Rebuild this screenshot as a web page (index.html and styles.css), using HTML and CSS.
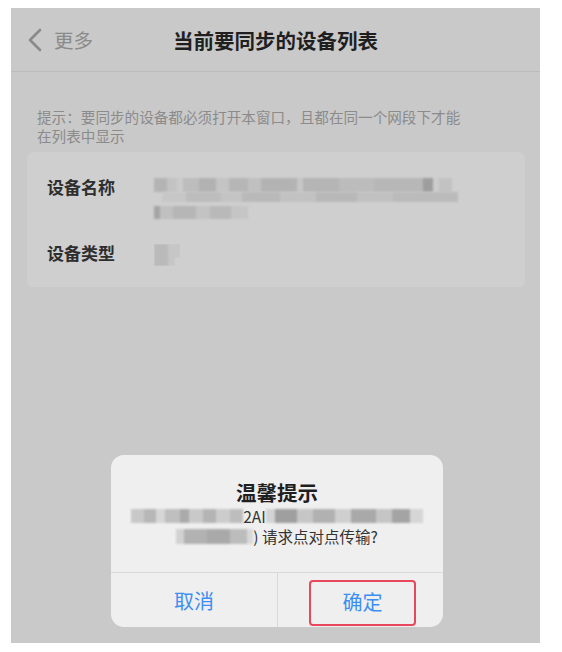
FILE: index.html
```html
<!DOCTYPE html>
<html lang="zh-CN">
<head>
<meta charset="utf-8">
<title>当前要同步的设备列表</title>
<link rel="stylesheet" href="styles.css">
</head>
<body>
<div class="screen">
  <header class="navbar">
    <div class="back">
      <svg class="chevron" width="16" height="24" viewBox="0 0 16 24"><path d="M13 2 L3 12 L13 22" fill="none" stroke="#8a8a8a" stroke-width="2.6" stroke-linecap="round" stroke-linejoin="round"/></svg>
      <span class="back-text">更多</span>
    </div>
    <h1 class="title">当前要同步的设备列表</h1>
    <div></div>
  </header>

  <p class="hint">提示：要同步的设备都必须打开本窗口，且都在同一个网段下才能<br>在列表中显示</p>

  <section class="card">
    <div class="row">
      <div class="label">设备名称</div>
      <div class="value">
        <div class="mos mos-a m1"></div>
        <div class="mos mos-b m2"></div>
        <div class="mos mos-c m3"></div>
      </div>
    </div>
    <div class="row row-type">
      <div class="label">设备类型</div>
      <div class="value">
        <div class="mos mos-t"></div>
      </div>
    </div>
  </section>

  <div class="dialog">
    <div class="dialog-body">
      <div class="dialog-title">温馨提示</div>
      <div class="msg-line">
        <span class="dmos d1"></span><span class="msg-text">2AI</span><span class="dmos d2"></span>
      </div>
      <div class="msg-line">
        <span class="dmos d3"></span><span class="msg-text">) 请求点对点传输?</span>
      </div>
    </div>
    <div class="dialog-actions">
      <div class="btn">取消</div>
      <div class="btn btn-ok"><span class="ok-box">确定</span></div>
    </div>
  </div>
</div>
</body>
</html>
```

FILE: styles.css
```css
* { box-sizing: border-box; }
html, body { margin: 0; padding: 0; background: #ffffff; }
body { font-family: "Noto Sans CJK SC", "Noto Sans", sans-serif; }

.screen {
  position: relative;
  margin: 8px 0 0 11px;
  width: 529px;
  height: 635px;
  background: #c9c9c9;
  overflow: hidden;
}

.navbar {
  height: 64px;
  border-bottom: 1px solid #bcbcbc;
  display: grid;
  grid-template-columns: 1fr auto 1fr;
  align-items: center;
}
.back {
  display: flex;
  align-items: center;
  padding-left: 16px;
  gap: 11px;
}
.chevron { display: block; }
.back-text {
  font-size: 19.5px;
  color: #8a8a8a;
  line-height: 24px;
}
.title {
  margin: 0;
  font-size: 20.5px;
  font-weight: 700;
  color: #1f1f1f;
  line-height: 26px;
  letter-spacing: 0;
}

.hint {
  margin: 35px 0 0 26px;
  font-size: 14.6px;
  line-height: 19px;
  color: #8b8b8b;
}

.card {
  margin: 7px 15px 0 16px;
  background: #cfcfcf;
  border-radius: 6px;
  padding: 24px 20px 21px 20px;
}
.row { display: flex; align-items: flex-start; }
.row-type { margin-top: 23px; }
.label {
  width: 107px;
  flex: none;
  font-size: 17px;
  font-weight: 700;
  line-height: 22px;
  color: #2e2e2e;
}
.value { padding-top: 2px; }

.mos {
  filter: blur(0.9px);
}
.mos-a {
  width: 324px; height: 14px;
  background-image: linear-gradient(90deg,
    #b4b4b4 0 4%, #c3c3c3 4% 7%, #cbcbcb 7% 9%, #bdbdbd 9% 14%, #b2b2b2 14% 19%, #c4c4c4 19% 23%,
    #b6b6b6 23% 29%, #c0c0c0 29% 33%, #b3b3b3 33% 44%, #c6c6c6 44% 46%, #b5b5b5 46% 57%,
    #bcbcbc 57% 68%, #b7b7b7 68% 83%, #9e9e9e 83% 86%, #cdcdcd 86% 88%, #c2c2c2 88% 92%, #cfcfcf 92% 100%);
}
.mos-b {
  margin-left: 8px;
  width: 296px; height: 10px;
  background-image: linear-gradient(90deg,
    #c7c7c7 0 8%, #bdbdbd 8% 20%, #c4c4c4 20% 27%, #b9b9b9 27% 40%, #c2c2c2 40% 52%,
    #b8b8b8 52% 66%, #c1c1c1 66% 78%, #bbbbbb 78% 100%);
}
.m3 { margin-top: 4px; }
.mos-c {
  width: 94px; height: 13px;
  background-image: linear-gradient(90deg,
    #a5a5a5 0 6%, #c0c0c0 6% 20%, #b6b6b6 20% 45%, #c3c3c3 45% 60%, #b9b9b9 60% 82%, #c5c5c5 82% 100%);
}
.mos-t {
  width: 26px; height: 22px;
  background-image: linear-gradient(90deg, #bababa 0 55%, #c6c6c6 55% 100%);
  clip-path: polygon(0 0, 100% 0, 100% 60%, 80% 60%, 80% 100%, 0 100%);
}

.dialog {
  position: absolute;
  left: 100px;
  top: 447px;
  width: 332px;
  height: 172px;
  background: #efefef;
  border-radius: 13px;
  display: flex;
  flex-direction: column;
  overflow: hidden;
}
.dialog-body {
  flex: none;
  height: 118px;
  padding-top: 24px;
  text-align: center;
  border-bottom: 1px solid #d9d9d9;
}
.dialog-title {
  font-size: 20.5px;
  font-weight: 700;
  line-height: 27px;
  color: #1f1f1f;
}
.msg-line {
  display: flex;
  justify-content: center;
  align-items: center;
  height: 20px;
  font-size: 15.5px;
  color: #333333;
}
.msg-text { line-height: 20px; white-space: pre; }
.dmos {
  display: inline-block;
  height: 14px;
  filter: blur(0.9px);
}
.d1 {
  width: 112px;
  background-image: linear-gradient(90deg,
    #c8c8c8 0 12%, #b7b7b7 12% 22%, #d6d6d6 22% 30%, #bfbfbf 30% 44%, #aaaaaa 44% 52%,
    #c9c9c9 52% 64%, #b4b4b4 64% 76%, #cccccc 76% 88%, #bdbdbd 88% 100%);
}
.d2 {
  width: 157px;
  background-image: linear-gradient(90deg,
    #d3d3d3 0 6%, #9f9f9f 6% 20%, #c6c6c6 20% 30%, #b1b1b1 30% 44%, #cfcfcf 44% 54%,
    #a9a9a9 54% 70%, #c5c5c5 70% 80%, #a4a4a4 80% 92%, #d6d6d6 92% 100%);
}
.d3 {
  width: 77px;
  height: 15px;
  background-image: linear-gradient(90deg,
    #d2d2d2 0 10%, #b2b2b2 10% 40%, #a9a9a9 40% 70%, #bcbcbc 70% 92%, #d8d8d8 92% 100%);
}

.dialog-actions {
  flex: 1;
  display: grid;
  grid-template-columns: 166px 1fr;
}
.btn {
  display: flex;
  align-items: center;
  justify-content: center;
  font-size: 20px;
  color: #3d8ef0;
}
.btn + .btn { border-left: 1px solid #d9d9d9; }
.btn-ok { padding: 7px 27px 1px 31px; }
.ok-box {
  display: flex;
  align-items: center;
  justify-content: center;
  width: 100%;
  height: 100%;
  border: 2.5px solid #e9485c;
  border-radius: 4px;
  padding-bottom: 4px;
}
```
